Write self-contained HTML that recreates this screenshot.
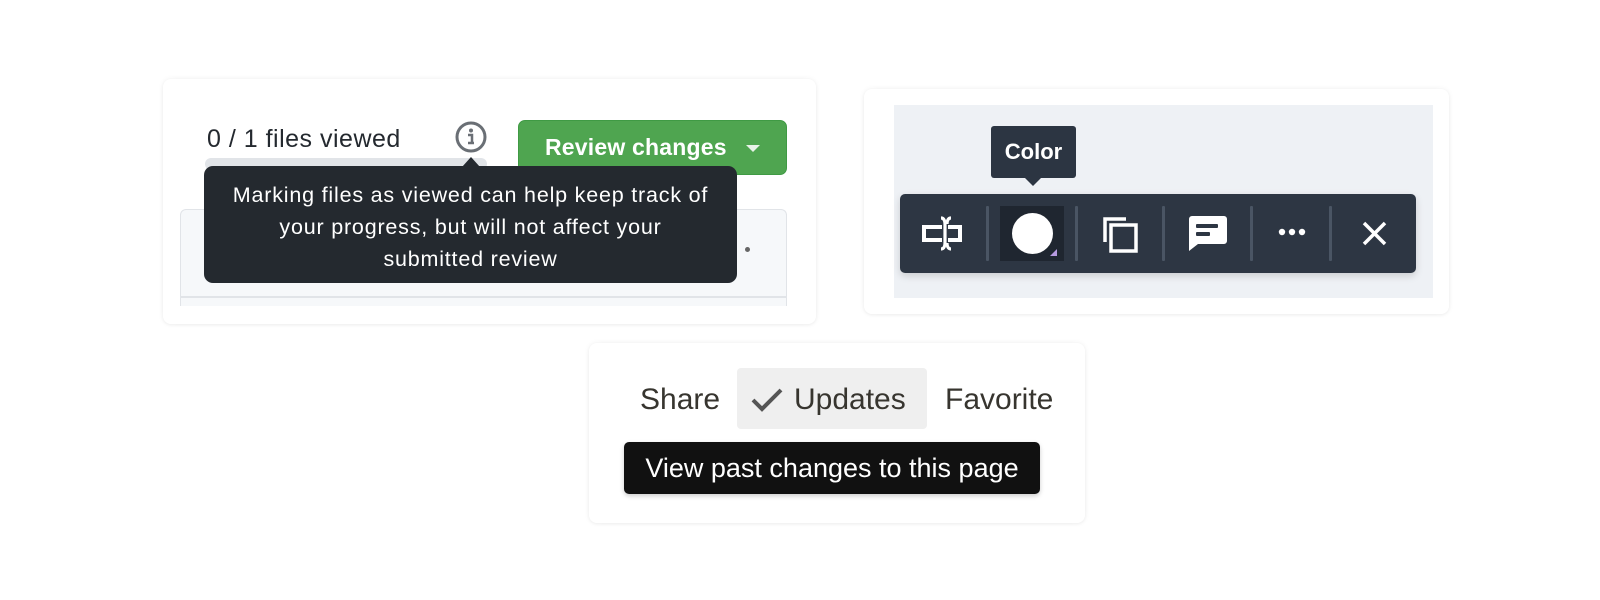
<!DOCTYPE html>
<html><head><meta charset="utf-8"><style>
*{margin:0;padding:0;box-sizing:border-box}
body{width:1600px;height:600px;background:#fff;position:relative;overflow:hidden;font-family:"Liberation Sans",sans-serif}
.a{position:absolute}
.card{position:absolute;background:#fff;border-radius:8px;box-shadow:0 0 6px rgba(0,0,0,0.06),0 1px 3px rgba(0,0,0,0.04)}
.sep{position:absolute;top:206px;width:3px;height:55px;background:#4a5564;border-radius:1px}
</style></head><body>

<div class="card" style="left:163px;top:79px;width:653px;height:245px"></div>
<div class="a" style="left:207px;top:125px;font-size:25px;letter-spacing:0.5px;color:#24292f">0 / 1 files viewed</div>
<div class="a" style="left:205px;top:158px;width:282px;height:12px;background:#e1e4e8;border-radius:6px"></div>
<svg class="a" style="left:454px;top:120px" width="34" height="34" viewBox="0 0 34 34"><circle cx="17" cy="17" r="14" fill="none" stroke="#6a6f75" stroke-width="3"/><circle cx="17" cy="10.5" r="2" fill="#6a6f75"/><path d="M14 15h4v8M14 23h6" stroke="#6a6f75" stroke-width="2.5" fill="none"/></svg>
<div class="a" style="left:518px;top:120px;width:269px;height:55px;background:#4fa550;border:1px solid #3f9a44;border-radius:7px;color:#fff;font-size:23px;letter-spacing:0.2px;font-weight:bold;line-height:53px;padding-left:26px">Review changes</div>
<div class="a" style="left:746px;top:145px;width:0;height:0;border-left:7px solid transparent;border-right:7px solid transparent;border-top:7px solid #e8f3e8"></div>
<div class="a" style="left:180px;top:209px;width:607px;height:97px;background:#f6f8fa;border:1px solid #e1e4e8;border-bottom:none;border-radius:6px 6px 0 0"></div>
<div class="a" style="left:181px;top:296px;width:605px;height:2px;background:#e1e4e8"></div>
<div class="a" style="left:745px;top:247px;width:5px;height:5px;background:#666;border-radius:50%"></div>
<div class="a" style="left:462px;top:157px;width:0;height:0;border-left:9px solid transparent;border-right:9px solid transparent;border-bottom:10px solid #24292f"></div>
<div class="a" style="left:204px;top:166px;width:533px;height:117px;background:#24292f;border-radius:9px;color:#fff;font-size:21.5px;letter-spacing:0.8px;line-height:32px;text-align:center;padding-top:13px;white-space:nowrap">Marking files as viewed can help keep track of<br>your progress, but will not affect your<br>submitted review</div>

<div class="card" style="left:864px;top:89px;width:585px;height:225px"></div>
<div class="a" style="left:894px;top:105px;width:539px;height:193px;background:#eef1f5"></div>
<div class="a" style="left:991px;top:126px;width:85px;height:52px;background:#2c3542;border-radius:3px;color:#fff;font-size:22px;font-weight:bold;text-align:center;line-height:52px">Color</div>
<div class="a" style="left:1024px;top:177px;width:0;height:0;border-left:9px solid transparent;border-right:9px solid transparent;border-top:9px solid #2c3542"></div>
<div class="a" style="left:900px;top:194px;width:516px;height:79px;background:#2d3643;border-radius:5px;box-shadow:0 3px 8px rgba(0,0,0,0.15)"></div>
<svg class="a" style="left:920px;top:215px" width="46" height="40" viewBox="0 0 46 40"><path d="M22 12H4v13h18" fill="none" stroke="#fff" stroke-width="4"/><path d="M28 12h12v13H28" fill="none" stroke="#fff" stroke-width="4"/><path d="M21 3c3 0 4 3 4 6v19c0 3-1 6-4 6M31 3c-3 0-4 3-4 6M31 34c-3 0-4-3-4-6" fill="none" stroke="#fff" stroke-width="3.2"/></svg>
<div class="sep" style="left:986px"></div>
<div class="a" style="left:1000px;top:206px;width:64px;height:55px;background:#1f2630"></div>
<div class="a" style="left:1012px;top:213px;width:41px;height:41px;background:#fff;border-radius:50%"></div>
<div class="a" style="left:1050px;top:249px;width:0;height:0;border-left:7px solid transparent;border-bottom:7px solid #b69ae0"></div>
<div class="sep" style="left:1075px"></div>
<svg class="a" style="left:1101px;top:215px" width="40" height="40" viewBox="0 0 40 40"><path d="M4 27V4h21" fill="none" stroke="#fff" stroke-width="3.5"/><rect x="10" y="10" width="25" height="26" fill="none" stroke="#fff" stroke-width="3.5"/></svg>
<div class="sep" style="left:1162px"></div>
<svg class="a" style="left:1187px;top:215px" width="42" height="37" viewBox="0 0 42 37"><path d="M2 4a3 3 0 0 1 3-3h32a3 3 0 0 1 3 3v22a3 3 0 0 1-3 3H11l-9 7z" fill="#fff"/><rect x="9" y="9" width="22" height="4" rx="1" fill="#2d3643"/><rect x="9" y="17" width="14" height="4" rx="1" fill="#2d3643"/></svg>
<div class="sep" style="left:1250px"></div>
<svg class="a" style="left:1277px;top:226px" width="30" height="12"><circle cx="5" cy="6" r="3.2" fill="#fff"/><circle cx="15" cy="6" r="3.2" fill="#fff"/><circle cx="25" cy="6" r="3.2" fill="#fff"/></svg>
<div class="sep" style="left:1329px"></div>
<svg class="a" style="left:1361px;top:220px" width="27" height="27"><path d="M3 3l21 21M24 3L3 24" stroke="#fff" stroke-width="3.5"/></svg>

<div class="card" style="left:589px;top:343px;width:496px;height:180px"></div>
<div class="a" style="left:737px;top:368px;width:190px;height:61px;background:#efefef;border-radius:4px"></div>
<div class="a" style="left:640px;top:382px;font-size:30px;color:#37352f;line-height:36px">Share</div>
<svg class="a" style="left:750px;top:387px" width="34" height="26"><path d="M3 13l9 9L31 3" fill="none" stroke="#555" stroke-width="4"/></svg>
<div class="a" style="left:794px;top:382px;font-size:30px;color:#37352f;line-height:36px">Updates</div>
<div class="a" style="left:945px;top:382px;font-size:30px;color:#37352f;line-height:36px">Favorite</div>
<div class="a" style="left:624px;top:442px;width:416px;height:52px;background:#111;border-radius:5px;box-shadow:0 2px 5px rgba(0,0,0,0.2);color:#fff;font-size:27px;line-height:52px;text-align:center;white-space:nowrap">View past changes to this page</div>
</body></html>
